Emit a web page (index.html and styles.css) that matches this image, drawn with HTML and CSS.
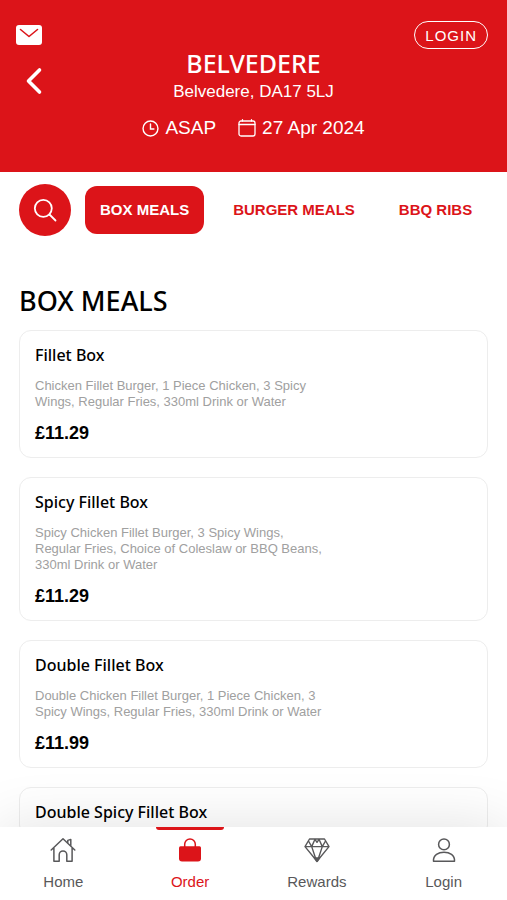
FILE: index.html
```html
<!DOCTYPE html>
<html lang="en">
<head>
<meta charset="utf-8">
<meta name="viewport" content="width=device-width, initial-scale=1">
<title>Belvedere menu</title>
<link rel="stylesheet" href="styles.css">
</head>
<body>
<div class="app">
  <header class="header">
    <div class="header-side">
      <button class="icon-button" type="button" aria-label="Messages">
        <svg width="26" height="20" viewBox="0 0 26 20"><rect width="26" height="20" rx="3" fill="#fff"/><path d="M4.500 4.500 13 11.500l8.500-7" fill="none" stroke="#dc1419" stroke-width="1.600" stroke-linecap="round" stroke-linejoin="round"/></svg>
      </button>
      <button class="icon-button back" type="button" aria-label="Back">
        <svg width="16" height="26" viewBox="0 0 16 26" fill="none" stroke="#fff" stroke-width="3.600" stroke-linecap="round" stroke-linejoin="round"><path d="M13.500 2 2.500 13l11 11"/></svg>
      </button>
    </div>
    <div class="store">
      <h1 class="store-name">BELVEDERE</h1>
      <p class="store-address">Belvedere, DA17 5LJ</p>
      <div class="slot">
        <span class="slot-item">
          <svg width="17" height="17" viewBox="0 0 18 18" fill="none" stroke="#fff" stroke-width="1.500" stroke-linecap="round"><circle cx="9" cy="9" r="7.900"/><path d="M9 4.200V9.500h3.600"/></svg>
          ASAP
        </span>
        <span class="slot-item">
          <svg width="18" height="18" viewBox="0 0 18 18" fill="none" stroke="#fff" stroke-width="1.300" stroke-linecap="round"><rect x="1" y="2" width="16" height="15" rx="2"/><path d="M1 5.500h16M4.500 .700V2M13.500 .700V2"/></svg>
          27 Apr 2024
        </span>
      </div>
    </div>
    <div class="header-side header-end">
      <button class="login" type="button">LOGIN</button>
    </div>
  </header>

  <main class="content">
    <nav class="categories" aria-label="Categories">
      <button class="search" type="button" aria-label="Search">
        <svg width="24" height="24" viewBox="0 0 24 24" fill="none" stroke="#fff" stroke-width="1.800" stroke-linecap="round"><circle cx="10.300" cy="10.300" r="8.500"/><path d="m16.500 16.500 6 6"/></svg>
      </button>
      <a class="category active" href="#box-meals">BOX MEALS</a>
      <a class="category" href="#burger-meals">BURGER MEALS</a>
      <a class="category" href="#bbq-ribs">BBQ RIBS</a>
    </nav>

    <section class="menu" id="box-meals">
      <h2 class="menu-title">BOX MEALS</h2>
      <article class="card">
        <h3 class="card-title">Fillet Box</h3>
        <p class="card-text">Chicken Fillet Burger, 1 Piece Chicken, 3 Spicy Wings, Regular Fries, 330ml Drink or Water</p>
        <p class="price">£11.29</p>
      </article>
      <article class="card">
        <h3 class="card-title">Spicy Fillet Box</h3>
        <p class="card-text">Spicy Chicken Fillet Burger, 3 Spicy Wings, Regular Fries, Choice of Coleslaw or BBQ Beans, 330ml Drink or Water</p>
        <p class="price">£11.29</p>
      </article>
      <article class="card">
        <h3 class="card-title">Double Fillet Box</h3>
        <p class="card-text">Double Chicken Fillet Burger, 1 Piece Chicken, 3 Spicy Wings, Regular Fries, 330ml Drink or Water</p>
        <p class="price">£11.99</p>
      </article>
      <article class="card">
        <h3 class="card-title">Double Spicy Fillet Box</h3>
      </article>
    </section>
  </main>

  <nav class="tabs" aria-label="Main">
    <a class="tab" href="#home">
      <svg width="26" height="26" viewBox="0 0 26 26" fill="none" stroke="#58585a" stroke-width="1.500" stroke-linejoin="round" stroke-linecap="round"><path d="M1.200 13 13 1.800l11.800 11.200M3.900 11v13.300h5.300v-6.500a3.800 3.800 0 0 1 7.600 0v6.500h5.300V11M17.800 5.800V3.400l3-1v6.500"/></svg>
      Home
    </a>
    <a class="tab selected" href="#order" aria-current="page">
      <svg width="26" height="26" viewBox="0 0 26 26"><path d="M2 10.800A1.500 1.500 0 0 1 3.500 9.300h19a1.500 1.500 0 0 1 1.500 1.500V21.500a3 3 0 0 1-3 3H5a3 3 0 0 1-3-3z" fill="#dc1419"/><path d="M7.700 10V7.300a5.300 5.300 0 0 1 10.600 0V10" fill="none" stroke="#dc1419" stroke-width="1.500"/></svg>
      Order
    </a>
    <a class="tab" href="#rewards">
      <svg width="26" height="26" viewBox="0 0 26 26" fill="none" stroke="#58585a" stroke-width="1.400" stroke-linejoin="round"><path d="M5.500 2h15l4.500 7.600L13 24.300 1 9.600zM1 9.600h24M4.500 4 7.700 9.600 11 2.300l2 3 2-3 3.300 7.300L21.500 4M7.700 9.600 12.500 24M18.300 9.600 13.500 24"/><path d="m10.500 21 2.500 3.500 2.500-3.500z" fill="#58585a"/></svg>
      Rewards
    </a>
    <a class="tab" href="#login">
      <svg width="26" height="26" viewBox="0 0 26 26" fill="none" stroke="#58585a" stroke-width="1.500" stroke-linejoin="round"><circle cx="13" cy="7.400" r="5.400"/><path d="M2.500 24.200c-1-12 22-12 21 0z"/></svg>
      Login
    </a>
  </nav>
</div>
</body>
</html>
```

FILE: styles.css
```css
:root {
  --red: #dc1419;
  --body: "Liberation Sans", Arial, sans-serif;
  --display: "Noto Sans", "Open Sans", sans-serif;
}

* { box-sizing: border-box; }

body, h1, h2, h3, p { margin: 0; }

body {
  font-family: var(--body);
  background: #fff;
  color: #000;
}

button {
  font: inherit;
  border: 0;
  padding: 0;
  background: none;
  cursor: pointer;
}

a { text-decoration: none; }

svg { display: block; overflow: visible; }

.app {
  display: flex;
  flex-direction: column;
  height: 100vh;
}

.header {
  display: grid;
  grid-template-columns: 1fr auto 1fr;
  padding: 20px 16px 32px;
  background: var(--red);
  color: #fff;
}

.header-side {
  display: flex;
  flex-direction: column;
  align-items: flex-start;
  gap: 23px;
  padding-top: 5px;
}

.header-end {
  align-items: flex-end;
  padding: 1px 3px 0 0;
}

.back { margin-left: 10px; }

.login {
  height: 28px;
  padding: 0 10px;
  border: 1px solid #fff;
  border-radius: 14px;
  color: #fff;
  font-size: 15px;
  letter-spacing: 1px;
}

.store {
  display: flex;
  flex-direction: column;
  align-items: center;
  padding-top: 26px;
}

.store-name {
  font: 500 25px/34px var(--display);
}

.store-address {
  font-size: 17px;
  line-height: 24px;
}

.slot {
  display: flex;
  gap: 22px;
  padding-top: 12px;
}

.slot-item {
  display: flex;
  align-items: center;
  gap: 6px;
  font-size: 19px;
  line-height: 24px;
  white-space: nowrap;
}

.content {
  flex: 1;
  min-height: 0;
  overflow-y: auto;
  scrollbar-width: none;
}

.categories {
  display: flex;
  align-items: center;
  padding: 12px 0 0 19px;
  overflow: hidden;
}

.search {
  display: grid;
  place-items: center;
  flex: none;
  width: 52px;
  height: 52px;
  margin-right: 14px;
  border-radius: 50%;
  background: var(--red);
}

.category {
  flex: none;
  margin-right: 14px;
  padding: 0 15px;
  border-radius: 12px;
  color: var(--red);
  font-size: 15px;
  font-weight: 700;
  line-height: 48px;
}

.category.active {
  background: var(--red);
  color: #fff;
}

.menu {
  display: flex;
  flex-direction: column;
  gap: 19px;
  padding: 46px 19px 19px;
}

.menu-title {
  margin-bottom: -9px;
  font: 500 27px/38px var(--display);
}

.card {
  padding: 14px 15px;
  border: 1px solid #ededed;
  border-radius: 12px;
}

.card-title {
  font: 500 16px/20px var(--display);
}

.card-text {
  max-width: 296px;
  margin: 13px 0;
  color: #a0a0a0;
  font-size: 13px;
  line-height: 16px;
}

.price {
  font-size: 18px;
  font-weight: 700;
  line-height: 20px;
}

.tabs {
  position: relative;
  display: grid;
  grid-template-columns: repeat(4, 1fr);
  background: #fff;
  box-shadow: 0 0 60px rgba(0, 0, 0, 0.12);
}

.tab {
  position: relative;
  display: flex;
  flex-direction: column;
  align-items: center;
  gap: 9px;
  padding: 10px 0 8px;
  color: #58585a;
  font-size: 15px;
  line-height: 20px;
}

.tab.selected { color: var(--red); }

.tab.selected::before {
  content: "";
  position: absolute;
  top: 0;
  width: 68px;
  height: 3px;
  border-radius: 0 0 3px 3px;
  background: var(--red);
}
```
